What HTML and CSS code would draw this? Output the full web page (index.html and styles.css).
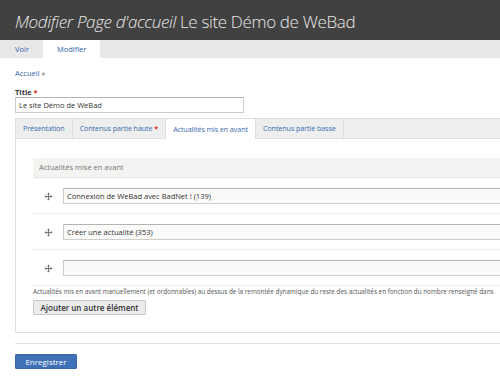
FILE: index.html
```html
<!DOCTYPE html>
<html lang="fr">
<head>
<meta charset="utf-8">
<title>Modifier Page d'accueil</title>
<link rel="stylesheet" href="styles.css">
</head>
<body>
<div class="branding">
  <h1 class="page-title"><em>Modifier Page d'accueil</em> Le site Démo de WeBad</h1>
</div>
<ul class="tabs-primary">
  <li><a href="#">Voir</a></li>
  <li class="active"><a href="#">Modifier</a></li>
</ul>
<div class="page">
  <div class="breadcrumb"><a href="#">Accueil</a> »</div>
  <div class="form-item">
    <label class="label">Title <span class="req">*</span></label>
    <input class="text-input" type="text" value="Le site Démo de WeBad">
  </div>
  <ul class="htabs">
    <li><a href="#">Présentation</a></li>
    <li><a href="#">Contenus partie haute <span class="req">*</span></a></li>
    <li class="active"><a href="#">Actualités mis en avant</a></li>
    <li><a href="#">Contenus partie basse</a></li>
  </ul>
  <div class="panel">
    <div class="field-table">
      <div class="table-head">Actualités mise en avant</div>
      <div class="row">
        <span class="handle"><svg width="9" height="9" viewBox="0 0 9 9"><path d="M4.5 0.5 L2.8 2.3 H6.2 Z M4.5 8.5 L2.8 6.7 H6.2 Z M0.5 4.5 L2.3 2.8 V6.2 Z M8.5 4.5 L6.7 2.8 V6.2 Z" fill="#777"/><path d="M4.5 1.5 V7.5 M1.5 4.5 H7.5" stroke="#777" stroke-width="1"/></svg></span>
        <input class="text-input row-input" type="text" value="Connexion de WeBad avec BadNet ! (139)">
      </div>
      <div class="row">
        <span class="handle"><svg width="9" height="9" viewBox="0 0 9 9"><path d="M4.5 0.5 L2.8 2.3 H6.2 Z M4.5 8.5 L2.8 6.7 H6.2 Z M0.5 4.5 L2.3 2.8 V6.2 Z M8.5 4.5 L6.7 2.8 V6.2 Z" fill="#777"/><path d="M4.5 1.5 V7.5 M1.5 4.5 H7.5" stroke="#777" stroke-width="1"/></svg></span>
        <input class="text-input row-input" type="text" value="Créer une actualité (353)">
      </div>
      <div class="row">
        <span class="handle"><svg width="9" height="9" viewBox="0 0 9 9"><path d="M4.5 0.5 L2.8 2.3 H6.2 Z M4.5 8.5 L2.8 6.7 H6.2 Z M0.5 4.5 L2.3 2.8 V6.2 Z M8.5 4.5 L6.7 2.8 V6.2 Z" fill="#777"/><path d="M4.5 1.5 V7.5 M1.5 4.5 H7.5" stroke="#777" stroke-width="1"/></svg></span>
        <input class="text-input row-input" type="text" value="">
      </div>
    </div>
    <div class="description">Actualités mis en avant manuellement (et ordonnables) au dessus de la remontée dynamique du reste des actualités en fonction du nombre renseigné dans</div>
    <button class="btn" type="button">Ajouter un autre élément</button>
  </div>
  <div class="actions">
    <button class="btn btn-primary" type="button">Enregistrer</button>
  </div>
</div>
</body>
</html>
```
FILE: styles.css
```css
html, body {
  margin: 0;
  padding: 0;
  overflow: hidden;
  background: #fff;
}
body {
  font-family: "Open Sans", "Liberation Sans", sans-serif;
  font-size: 8px;
  color: #333;
  width: 500px;
  height: 376px;
}
a {
  color: #2f64ac;
  text-decoration: none;
}
.branding {
  background: #414141;
  height: 40px;
  padding: 0 15px;
  display: flex;
  align-items: center;
}
.page-title {
  margin: 0;
  font-weight: 300;
  font-size: 17px;
  color: #eaeaea;
  white-space: nowrap;
  letter-spacing: -0.35px;
  padding-top: 2px;
}
.page-title em {
  font-style: italic;
}
.tabs-primary {
  list-style: none;
  margin: 0;
  padding: 0 0 0 1px;
  background: #e8e8e8;
  height: 18px;
  display: flex;
}
.tabs-primary li a {
  display: block;
  padding: 0 14px;
  line-height: 18px;
  font-size: 7.5px;
  color: #2f64ac;
}
.tabs-primary li.active a {
  background: #fff;
}
.page {
  padding: 0 15px;
}
.breadcrumb {
  padding-top: 10px;
  line-height: 10px;
  font-size: 7.5px;
  color: #333;
}
.form-item {
  margin-top: 9px;
}
.label {
  display: block;
  font-weight: 700;
  font-size: 7.5px;
  line-height: 10px;
  color: #333;
}
.req {
  color: #e0261c;
  font-weight: 700;
}
.text-input {
  display: block;
  box-sizing: border-box;
  width: 229px;
  height: 16px;
  margin: 0;
  border: 1px solid #ccc;
  border-top-color: #b4b4b4;
  padding: 0 3px;
  font-family: "Open Sans", "Liberation Sans", sans-serif;
  font-size: 7.5px;
  color: #333;
  background: #fff;
}
.htabs {
  list-style: none;
  margin: 5px -15px 0 0;
  padding: 0;
  display: flex;
  height: 19px;
  background: #eee;
  border-top: 1px solid #ddd;
  border-left: 1px solid #ddd;
  border-bottom: 1px solid #ddd;
}
.htabs li {
  border-right: 1px solid #ddd;
}
.htabs li a {
  display: block;
  padding: 0 7px;
  line-height: 19px;
  font-size: 7.2px;
  font-weight: 500;
  color: #3b6cb0;
  letter-spacing: -0.1px;
}
.htabs li.active {
  background: #fff;
  margin-bottom: -1px;
}
.htabs li.active a {
  font-weight: 400;
  line-height: 20px;
}
.panel {
  margin-right: -15px;
  border-left: 1px solid #ddd;
  border-bottom: 1px solid #e2e2e2;
  padding: 19px 0 17px 17px;
}
.table-head {
  background: #f3f3f1;
  border-bottom: 1px solid #e6e6e4;
  height: 19px;
  line-height: 19px;
  padding-left: 6px;
  font-size: 7.5px;
  color: #777;
}
.row {
  display: flex;
  align-items: center;
  height: 35px;
  border-bottom: 1px solid #ececec;
}
.handle {
  width: 30px;
  display: flex;
  justify-content: center;
  padding-top: 1px;
}
.row-input {
  flex: 1;
  width: auto;
  background: #fafaf9;
  border-right: none;
}
.description {
  margin-top: 1px;
  font-size: 6.35px;
  line-height: 10px;
  color: #555;
  white-space: nowrap;
}
.btn {
  display: block;
  margin-top: 3px;
  height: 15px;
  padding: 0;
  border: 1px solid #c8c8c8;
  border-radius: 1px;
  background: #ececec;
  font-family: "Open Sans", "Liberation Sans", sans-serif;
  font-size: 8px;
  font-weight: 600;
  color: #333;
  width: 113px;
  white-space: nowrap;
}
.actions {
  margin-top: 10px;
  border-top: 1px solid #e2e2e2;
  margin-right: -15px;
  padding-top: 10px;
}
.btn-primary {
  margin-top: 0;
  width: 62px;
  height: 15px;
  background: #3f71b6;
  border-color: #3a68aa;
  color: #fff;
  font-weight: 400;
  padding: 0;
}
```
